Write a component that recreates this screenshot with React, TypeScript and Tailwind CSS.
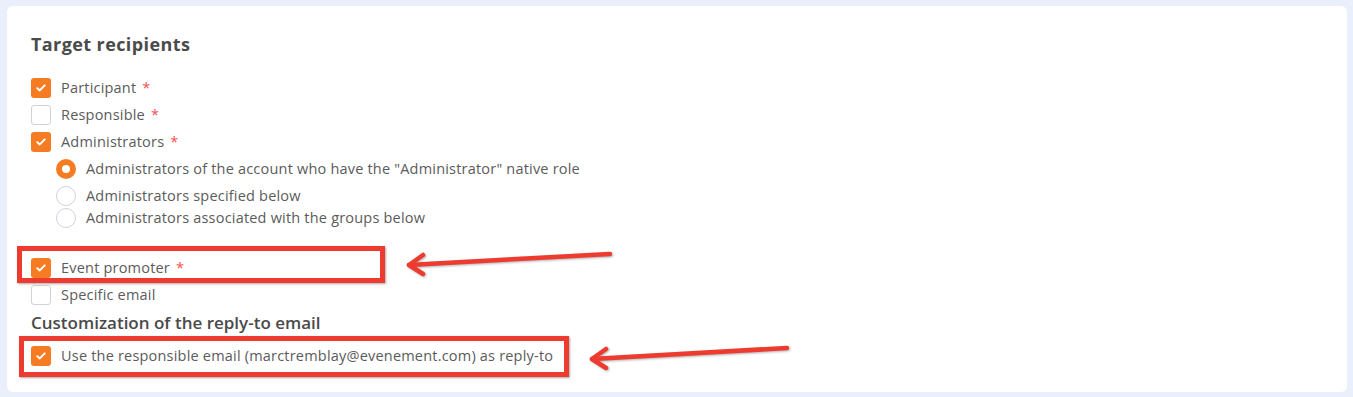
import React from "react";

const Check = () => (
  <span className="w-5 h-5 rounded-[3px] bg-[#f57c22] flex items-center justify-center shrink-0">
    <svg width="10" height="8" viewBox="0 0 10 8" fill="none">
      <path d="M1.3 4.2 L3.8 6.4 L8.7 1.4" stroke="white" strokeWidth="2" strokeLinecap="round" strokeLinejoin="round" />
    </svg>
  </span>
);
const Empty = () => <span className="w-5 h-5 rounded-[3px] border border-[#cfd3da] bg-white shrink-0" />;

const Row = ({ checked, label, star }: { checked: boolean; label: string; star?: boolean }) => (
  <div className="h-[27px] flex items-center gap-[10px]">
    {checked ? <Check /> : <Empty />}
    <span>
      {label}
      {star && <span className="text-[#ef5350] ml-[6px]">*</span>}
    </span>
  </div>
);

const Radio = ({ on, label, cls }: { on?: boolean; label: string; cls: string }) => (
  <div className={`h-[22px] flex items-center gap-[10px] pl-[25px] ${cls}`}>
    {on ? (
      <span className="w-5 h-5 rounded-full bg-[#f57c22] flex items-center justify-center shrink-0">
        <span className="w-[8px] h-[8px] rounded-full bg-white" />
      </span>
    ) : (
      <span className="w-5 h-5 rounded-full border border-[#cfd3da] bg-white shrink-0" />
    )}
    <span>{label}</span>
  </div>
);

export default function App() {
  return (
    <div className="w-[1353px] h-[397px] bg-[#eaf0fb] pt-[6px] pl-[7px] overflow-hidden relative" style={{ fontFamily: "'Open Sans', 'Noto Sans', sans-serif" }}>
      <div className="w-[1340px] h-[386px] bg-white rounded-[6px] relative pl-[24px] pt-[26px] text-[14.5px] tracking-[0.2px] text-[#5b5b5b]">
        <h2 className="text-[18px] leading-[24px] font-bold tracking-[0.4px] text-[#4a4a4a]">Target recipients</h2>
        <div className="mt-[18px]">
          <Row checked label="Participant" star />
          <Row checked={false} label="Responsible" star />
          <Row checked label="Administrators" star />
          <Radio on label={'Administrators of the account who have the "Administrator" native role'} cls="mt-[3px]" />
          <Radio label="Administrators specified below" cls="mt-[5px]" />
          <Radio label="Administrators associated with the groups below" cls="" />
          <div className="mt-[25px]">
            <Row checked label="Event promoter" star />
          </div>
          <Row checked={false} label="Specific email" />
        </div>
        <h3 className="mt-[3px] text-[17px] leading-[24px] font-semibold tracking-normal text-[#4a4a4a]">Customization of the reply-to email</h3>
        <div className="mt-[7px]">
          <Row checked label="Use the responsible email (marctremblay@evenement.com) as reply-to" />
        </div>

        <div className="absolute left-[10px] top-[240px] w-[368px] h-[37px] border-[5px] border-[#ee3b2f] shadow-[1px_1px_2px_rgba(0,0,0,0.35)]" />
        <div className="absolute left-[12px] top-[330px] w-[550px] h-[41px] border-[5px] border-[#ee3b2f] shadow-[1px_1px_2px_rgba(0,0,0,0.35)]" />
      </div>
      <svg className="absolute left-0 top-0" width="1353" height="397" style={{ filter: "drop-shadow(1px 1px 1px rgba(0,0,0,0.3))" }}>
        <g stroke="#ee3b2f" strokeWidth="4.5" strokeLinecap="round" strokeLinejoin="round" fill="none">
          <path d="M610 254 L409 265" />
          <path d="M423 255 L409 265 L423 274" />
          <path d="M787 348 L592 359" />
          <path d="M606 349 L592 359 L606 368" />
        </g>
      </svg>
    </div>
  );
}
